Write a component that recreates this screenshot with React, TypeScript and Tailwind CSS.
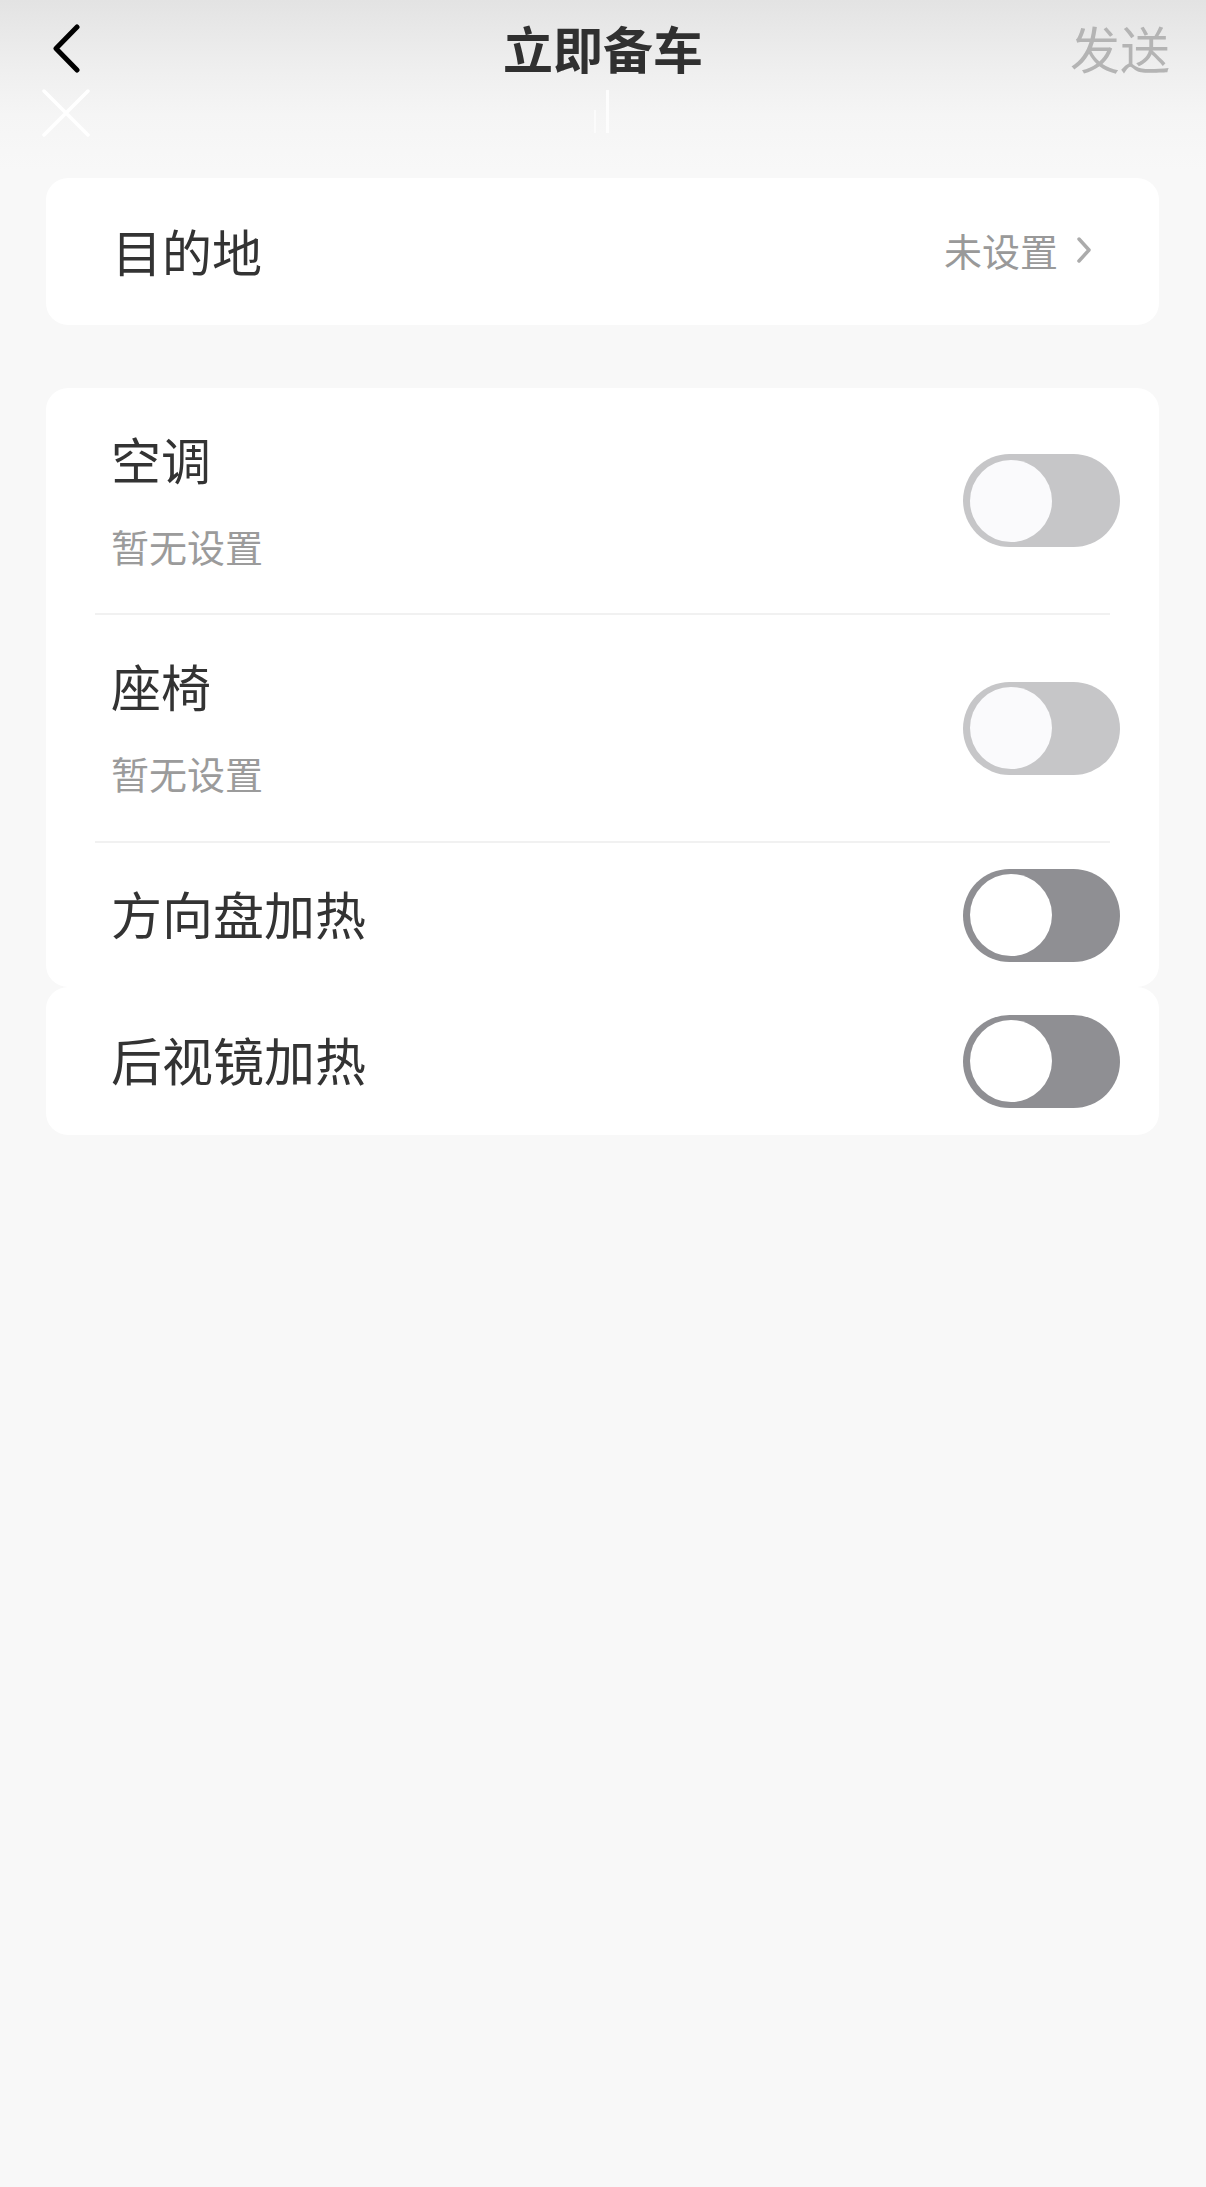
import React from "react";

const font = { fontFamily: '"Noto Sans CJK SC", "Noto Sans", sans-serif' };

function Toggle({ dark }: { dark?: boolean }) {
  return (
    <div
      className={`w-[157px] h-[93px] rounded-full flex items-center pl-[7px] shrink-0 ${
        dark ? "bg-[#8f8f93]" : "bg-[#c6c6c8]"
      }`}
    >
      <div className={`w-[82px] h-[82px] rounded-full ${dark ? "bg-white" : "bg-[#fafafc]"}`} />
    </div>
  );
}

function Divider() {
  return <div className="h-[2px] mx-[49px] bg-[#f1f1f1]" />;
}

export default function App() {
  return (
    <div
      className="relative w-[1206px] min-h-[2187px] bg-[linear-gradient(to_bottom,#e3e3e3_0px,#efefef_70px,#f5f5f5_115px,#f8f8f8_170px,#f8f8f8_100%)]"
      style={font}
    >
      {/* header */}
      <div className="grid grid-cols-[1fr_auto_1fr] items-center h-[98px] pb-[4px]">
        <div className="pl-[52px] flex items-center pt-[4px]">
          <svg width="30" height="50" viewBox="0 0 30 50" fill="none">
            <path d="M25 3 L4 24.5 L25 46" stroke="#000" strokeWidth="5" strokeLinecap="round" strokeLinejoin="round" />
          </svg>
        </div>
        <div className="text-[50px] leading-none font-bold text-[#303030]">立即备车</div>
        <div className="justify-self-end pr-[36px] text-[50px] leading-none text-[#b4b4b4]">发送</div>
      </div>

      {/* faint overlay artifacts */}
      <svg className="absolute left-[42px] top-[89px]" width="48" height="48" viewBox="0 0 48 48">
        <path d="M2 2 L46 46 M46 2 L2 46" stroke="#ffffff" strokeWidth="3.5" strokeLinecap="round" />
      </svg>
      <div className="absolute left-[606px] top-[90px] w-[3px] h-[43px] bg-white opacity-80" />
      <div className="absolute left-[594px] top-[110px] w-[2px] h-[23px] bg-white opacity-60" />

      <div className="px-[46px] pr-[47px] pt-[80px] flex flex-col">
        {/* card 1 */}
        <div className="h-[147px] bg-white rounded-[22px] flex items-center justify-between pl-[66px] pr-[67px] pb-[4px]">
          <span className="text-[50px] leading-none text-[#333333]">目的地</span>
          <div className="flex items-center gap-[18px]">
            <span className="text-[38px] leading-none text-[#999999]">未设置</span>
            <svg width="16" height="28" viewBox="0 0 16 28" fill="none">
              <path d="M3 3 L13 14 L3 25" stroke="#ababab" strokeWidth="3.5" strokeLinecap="round" strokeLinejoin="round" />
            </svg>
          </div>
        </div>

        {/* card 2 */}
        <div className="mt-[63px] bg-white rounded-[22px] flex flex-col">
          <div className="h-[225px] flex items-center justify-between pl-[65px] pr-[39px]">
            <div className="flex flex-col pb-[3px]">
              <span className="text-[50px] leading-[60px] text-[#333333]">空调</span>
              <span className="mt-[33px] text-[38px] leading-[50px] text-[#9b9b9b]">暂无设置</span>
            </div>
            <Toggle />
          </div>
          <Divider />
          <div className="h-[226px] flex items-center justify-between pl-[65px] pr-[39px]">
            <div className="flex flex-col pb-[3px]">
              <span className="text-[50px] leading-[60px] text-[#333333]">座椅</span>
              <span className="mt-[33px] text-[38px] leading-[50px] text-[#9b9b9b]">暂无设置</span>
            </div>
            <Toggle />
          </div>
          <Divider />
          <div className="h-[144px] flex items-center justify-between pl-[65px] pr-[39px]">
            <span className="text-[51px] leading-none text-[#333333] pb-[4px]">方向盘加热</span>
            <Toggle dark />
          </div>
        </div>

        {/* card 3 */}
        <div className="h-[148px] bg-white rounded-[22px] flex items-center justify-between pl-[65px] pr-[39px]">
          <span className="text-[51px] leading-none text-[#333333] pb-[4px]">后视镜加热</span>
          <Toggle dark />
        </div>
      </div>
    </div>
  );
}
